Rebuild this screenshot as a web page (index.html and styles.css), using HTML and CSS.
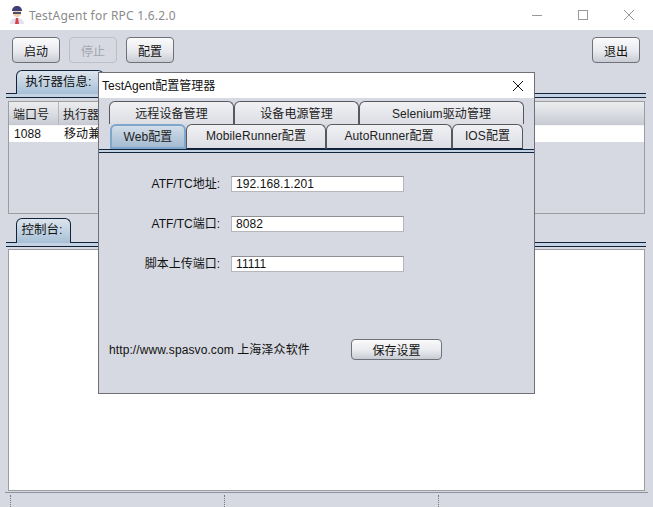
FILE: index.html
```html
<!DOCTYPE html>
<html lang="zh">
<head>
<meta charset="utf-8">
<title>TestAgent for RPC 1.6.2.0</title>
<link rel="stylesheet" href="styles.css">
</head>
<body>
<div class="app">
  <header class="titlebar">
    <svg class="app-icon" width="18" height="20" viewBox="0 0 18 20">
      <path d="M2 19c0-4 3-6 7-6s7 2 7 6z" fill="#dfe3ee"/>
      <path d="M8 13h2l1 6H7z" fill="#d8404a"/>
      <circle cx="9" cy="8" r="4" fill="#f3cdb0"/>
      <path d="M4 6c0-3 2-5 5-5s5 2 5 5H4z" fill="#3f3f78"/>
      <rect x="5" y="7" width="8" height="2" fill="#4a4f6a"/>
    </svg>
    <span class="app-title">TestAgent for RPC 1.6.2.0</span>
    <div class="win-controls">
      <svg width="16" height="16" viewBox="0 0 16 16"><path d="M3 8.5h10" stroke="#999" fill="none"/></svg>
      <svg width="16" height="16" viewBox="0 0 16 16"><rect x="3.5" y="3.5" width="9" height="9" stroke="#999" fill="none"/></svg>
      <svg width="16" height="16" viewBox="0 0 16 16"><path d="M3 3l10 10M13 3L3 13" stroke="#999" fill="none"/></svg>
    </div>
  </header>

  <div class="toolbar">
    <button class="btn">启动</button>
    <button class="btn is-disabled">停止</button>
    <button class="btn">配置</button>
    <button class="btn btn-end">退出</button>
  </div>

  <section class="panel panel-exec">
    <div class="tabline"><div class="tab tab-active tab-exec">执行器信息:</div></div>
    <div class="box box-exec">
      <div class="thead">
        <div class="th th-port">端口号</div>
        <div class="th th-rest">执行器</div>
      </div>
      <div class="trow">
        <div class="td td-port">1088</div>
        <div class="td">移动兼</div>
      </div>
    </div>
  </section>

  <section class="panel panel-console">
    <div class="tabline"><div class="tab tab-active tab-console">控制台:</div></div>
    <div class="box box-console"></div>
  </section>

  <footer class="statusbar">
    <div class="status-cell"></div>
    <div class="status-cell"></div>
    <div class="status-cell"></div>
  </footer>

  <div class="dialog">
    <div class="dialog-title">
      <span>TestAgent配置管理器</span>
      <svg width="12" height="12" viewBox="0 0 12 12"><path d="M1 1l10 10M11 1L1 11" stroke="#111" fill="none"/></svg>
    </div>
    <div class="dtabs">
      <div class="dtab-row dtab-row-back">
        <div class="dtab w-remote">远程设备管理</div>
        <div class="dtab w-power">设备电源管理</div>
        <div class="dtab w-sel">Selenium驱动管理</div>
      </div>
      <div class="dtab-row dtab-row-front">
        <div class="dtab dtab-active w-web">Web配置</div>
        <div class="dtab w-mobile">MobileRunner配置</div>
        <div class="dtab w-auto">AutoRunner配置</div>
        <div class="dtab w-ios">IOS配置</div>
      </div>
    </div>
    <div class="dtab-rule"></div>
    <form class="form">
      <div class="field"><label class="label">ATF/TC地址:</label><div class="input">192.168.1.201</div></div>
      <div class="field"><label class="label">ATF/TC端口:</label><div class="input">8082</div></div>
      <div class="field"><label class="label">脚本上传端口:</label><div class="input">11111</div></div>
      <div class="form-foot">
        <span class="link">http://www.spasvo.com 上海泽众软件</span>
        <button type="button" class="btn btn-save">保存设置</button>
      </div>
    </form>
  </div>
</div>
</body>
</html>
```
FILE: styles.css
```css
* { box-sizing: border-box; }
html, body { margin: 0; padding: 0; }
body {
  width: 653px;
  height: 507px;
  overflow: hidden;
  font: 12px/16px "Liberation Sans", "Noto Sans CJK SC", sans-serif;
  color: #111;
  background: #d6d9e1;
}
.app { position: relative; width: 653px; height: 507px; display: flex; flex-direction: column; }

.titlebar {
  height: 30px;
  flex: none;
  background: #fff;
  display: flex;
  align-items: center;
  padding-left: 8px;
}
.app-icon { margin-right: 3px; }
.app-title { font: 12px "Noto Sans", "Liberation Sans", sans-serif; color: #8a8a8a; letter-spacing: 0.22px; }
.win-controls { margin-left: auto; display: flex; gap: 30px; padding-right: 16px; }

.toolbar { height: 40px; flex: none; display: flex; gap: 9px; padding: 7px 13px 7px 12px; }
.btn {
  width: 48px;
  height: 26px;
  padding: 0;
  font: 12px "Noto Sans CJK SC", sans-serif;
  color: #111;
  border: 1px solid #6e7178;
  border-radius: 4px;
  background: linear-gradient(#fbfbfc 0%, #e9eaee 55%, #c9ccd4 100%);
}
.btn.is-disabled { color: #a3a6ad; border-color: #bcbfc6; background: #d6d9e1; }
.btn-end { margin-left: auto; }

.panel { padding: 0 7px 0 6px; flex: none; }
.panel-exec { height: 148px; }
.panel-console { height: 272px; }
.tabline {
  height: 28px;
  border-bottom: 1px solid #11233a;
  background:
    linear-gradient(#11233a, #11233a) 0 23px / 100% 1px no-repeat,
    linear-gradient(#c3d3e4, #c3d3e4) 0 24px / 100% 3px no-repeat;
  padding-left: 10px;
}
.panel-console .tabline { height: 29px; background-position: 0 24px, 0 25px; }
.tab {
  height: 24px;
  border: 1px solid #11233a;
  border-bottom: 0;
  border-radius: 6px 6px 0 0;
  font: 12.5px/22px "Liberation Sans", "Noto Sans CJK SC", sans-serif;
  text-align: center;
  padding-right: 3px;
  background: linear-gradient(#dde4ec 0%, #bccfe0 60%, #a7bfd6 100%);
}
.tab-exec { width: 88px; }
.tab-console { width: 55px; height: 25px; }

.box { margin: 3px 1px 0 2px; border: 1px solid #9b9da3; }
.box-exec { height: 113px; }
.box-console { height: 242px; background: #fff; margin-top: 2px; }
.thead {
  height: 24px;
  display: flex;
  background: linear-gradient(#eceded, #d9dbe1 55%, #c7cad2);
  border-bottom: 1px solid #f4f4f6;
}
.th { font: 12px/23px "Noto Sans CJK SC", sans-serif; padding-left: 4px; border-right: 1px solid #b3b6bd; color: #222; }
.th-port { width: 50px; }
.th-rest { flex: 1; border-right: 0; }
.trow { height: 16px; display: flex; background: #fff; }
.td { font: 12px/16px "Liberation Sans", "Noto Sans CJK SC", sans-serif; padding-left: 5px; letter-spacing: 0.1px; }
.td-port { width: 50px; }

.statusbar {
  margin: 2px 5px 0 5px;
  border-top: 1px solid #8f929a;
  flex: 1;
  display: grid;
  grid-template-columns: 214px 214px 1fr;
}
.status-cell { margin-top: 2px; border-left: 1px dotted #777; height: 12px; margin-left: 5px; }

.dialog {
  position: absolute;
  left: 98px;
  top: 72px;
  width: 437px;
  height: 322px;
  background: #d6d9e1;
  border: 1px solid #6f7177;
}
.dialog-title {
  height: 25px;
  background: #fff;
  display: flex;
  align-items: center;
  justify-content: space-between;
  padding: 0 10px 0 3px;
  font-size: 12px;
  color: #111;
}
.dtabs { padding: 3px 0 0 10px; }
.dtab-row { display: flex; height: 23px; }
.dtab-row-front { height: 25px; padding-left: 1px; }
.dtab {
  border: 1px solid #55585f;
  border-bottom: 0;
  border-radius: 6px 6px 0 0;
  text-align: center;
  font-size: 12px;
  line-height: 24px;
  color: #222;
  letter-spacing: 0.1px;
  background: linear-gradient(#f1f1f4, #dcdee4);
}
.dtab-row-front .dtab { border-bottom: 1px solid #11233a; line-height: 23px; }
.w-remote { width: 125px; }
.w-power { width: 125px; }
.w-sel { width: 165px; }
.w-web { width: 76px; }
.w-mobile { width: 140px; }
.w-auto { width: 126px; }
.w-ios { width: 71px; }
.dtab-row-front .dtab-active {
  border: 2px solid #7fa6cc;
  line-height: 22px;
  background: linear-gradient(#d2dde8, #a4bbd2);
}
.dtab-rule {
  height: 4px;
  border-top: 1px solid #11233a;
  border-bottom: 1px solid #11233a;
  background: #c3d3e4;
}

.form { padding-top: 23px; }
.field { display: flex; align-items: center; height: 15px; margin-bottom: 25px; }
.label { width: 121px; text-align: right; color: #111; }
.input {
  margin-left: 11px;
  width: 173px;
  height: 16px;
  background: #fff;
  border: 1px solid #b5b7bc;
  border-top-color: #8e9096;
  padding-left: 4px;
  font-size: 12px;
  line-height: 15px;
  letter-spacing: 0.1px;
}
.form-foot {
  display: flex;
  align-items: center;
  margin-top: 68px;
  padding-left: 10px;
}
.link { width: 242px; letter-spacing: 0.1px; }
.btn-save { width: 91px; height: 21px; font-size: 12px; }
```
